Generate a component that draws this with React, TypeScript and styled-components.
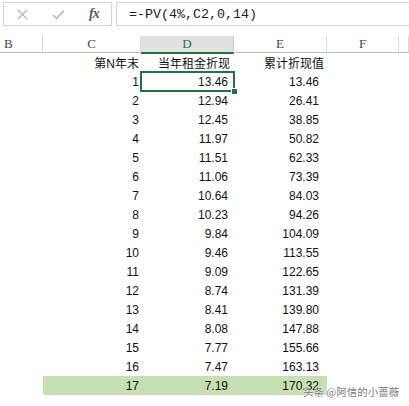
import React from "react";
import styled, { createGlobalStyle } from "styled-components";

const Global = createGlobalStyle`
  html, body { margin: 0; padding: 0; background: #ffffff; }
  body { width: 409px; height: 406px; overflow: hidden; }
`;

const COLS = "43px 98px 93px 93px 72px 1fr";

const Page = styled.div`
  position: relative;
  width: 409px;
  height: 406px;
  background: #fff;
  overflow: hidden;
  font-family: "Liberation Sans", "Noto Sans CJK SC", sans-serif;
`;

const FormulaBar = styled.div`
  display: flex;
  gap: 4px;
  padding: 2px 0 0 3px;
  height: 24px;
  margin-bottom: 10px;
`;

const ButtonBox = styled.div`
  width: 109px;
  box-sizing: border-box;
  border: 1px solid #d4d4d4;
  display: flex;
  align-items: center;
  padding-left: 13px;
`;

const IconSlot = styled.div<{ $w: number }>`
  width: ${(p) => p.$w}px;
  display: flex;
  align-items: center;
`;

const Fx = styled.span`
  font-family: "Liberation Serif", serif;
  font-style: italic;
  font-size: 14px;
  color: #5a5a5a;
  letter-spacing: -1px;
  font-weight: bold;
`;

const FormulaInput = styled.div`
  flex: 1;
  margin-right: -4px;
  box-sizing: border-box;
  border: 1px solid #d4d4d4;
  border-right: none;
  display: flex;
  align-items: center;
  padding-left: 12px;
  font-family: "Liberation Mono", monospace;
  font-size: 13.33px;
  color: #222;
`;

const HeaderRow = styled.div`
  display: grid;
  grid-template-columns: ${COLS};
  height: 17px;
`;

const HeaderCell = styled.div<{ $active?: boolean; $left?: boolean }>`
  box-sizing: border-box;
  height: ${(p) => (p.$active ? 18 : 17)}px;
  display: flex;
  align-items: center;
  justify-content: ${(p) => (p.$left ? "flex-start" : "center")};
  padding-left: ${(p) => (p.$left ? 4 : 0)}px;
  padding-bottom: 1px;
  font-family: "Liberation Serif", serif;
  font-size: 13px;
  color: ${(p) => (p.$active ? "#217346" : "#444")};
  background: ${(p) => (p.$active ? "#e1e1e1" : "#fff")};
  border-right: 1px solid ${(p) => (p.$active ? "#c8c8c8" : "#dadada")};
  border-bottom: ${(p) => (p.$active ? "2px solid #217346" : "1px solid #bdbdbd")};
`;

const Row = styled.div`
  display: grid;
  grid-template-columns: ${COLS};
  height: 19px;
`;

const Cell = styled.div<{ $pr?: number; $fill?: boolean; $selected?: boolean }>`
  position: relative;
  display: flex;
  align-items: center;
  justify-content: flex-end;
  padding-right: ${(p) => p.$pr ?? 0}px;
  font-size: 12px;
  color: #111;
  white-space: nowrap;
  background: ${(p) => (p.$fill ? "#c6e0b4" : "transparent")};
  ${(p) =>
    p.$selected &&
    `
    &::before {
      content: "";
      position: absolute;
      top: -1px;
      left: -1px;
      right: -1px;
      bottom: -1px;
      border: 2px solid #217346;
      pointer-events: none;
    }
    &::after {
      content: "";
      position: absolute;
      right: -3px;
      bottom: -3px;
      width: 5px;
      height: 5px;
      background: #217346;
      box-shadow: 0 0 0 1px #fff;
    }
  `}
`;

const Watermark = styled.div`
  position: absolute;
  left: 303px;
  top: 385px;
  font-size: 10.5px;
  color: rgba(70, 70, 70, 0.75);
  text-shadow: 0 0 2px #fff, 0 0 1px #fff;
  font-family: "Noto Sans CJK SC", sans-serif;
  white-space: nowrap;
  line-height: 14px;
`;

const dVals = ["13.46","12.94","12.45","11.97","11.51","11.06","10.64","10.23","9.84","9.46","9.09","8.74","8.41","8.08","7.77","7.47","7.19"];
const eVals = ["13.46","26.41","38.85","50.82","62.33","73.39","84.03","94.26","104.09","113.55","122.65","131.39","139.80","147.88","155.66","163.13","170.32"];

export default function App() {
  return (
    <Page>
      <Global />
      <FormulaBar>
        <ButtonBox>
          <IconSlot $w={35}>
            <svg width="11" height="11" viewBox="0 0 11 11">
              <path d="M1 1 L10 10 M10 1 L1 10" stroke="#b8b8b8" strokeWidth="1.3" />
            </svg>
          </IconSlot>
          <IconSlot $w={37}>
            <svg width="13" height="11" viewBox="0 0 13 11">
              <path d="M1 6 L4.5 9.5 L12 1.5" stroke="#b8b8b8" strokeWidth="1.6" fill="none" />
            </svg>
          </IconSlot>
          <IconSlot $w={20}>
            <Fx>fx</Fx>
          </IconSlot>
        </ButtonBox>
        <FormulaInput>=-PV(4%,C2,0,14)</FormulaInput>
      </FormulaBar>

      <HeaderRow>
        <HeaderCell $left>B</HeaderCell>
        <HeaderCell>C</HeaderCell>
        <HeaderCell $active>D</HeaderCell>
        <HeaderCell>E</HeaderCell>
        <HeaderCell>F</HeaderCell>
        <HeaderCell />
      </HeaderRow>

      <Row>
        <Cell />
        <Cell $pr={2}>第N年末</Cell>
        <Cell $pr={4}>当年租金折现</Cell>
        <Cell $pr={3}>累计折现值</Cell>
        <Cell />
        <Cell />
      </Row>

      {dVals.map((d, i) => {
        const last = i === dVals.length - 1;
        return (
          <Row key={i}>
            <Cell />
            <Cell $pr={2} $fill={last}>{i + 1}</Cell>
            <Cell $pr={6} $fill={last} $selected={i === 0}>{d}</Cell>
            <Cell $pr={8} $fill={last}>{eVals[i]}</Cell>
            <Cell />
            <Cell />
          </Row>
        );
      })}

      <Watermark>头条 @阿信的小蔷薇</Watermark>
    </Page>
  );
}
